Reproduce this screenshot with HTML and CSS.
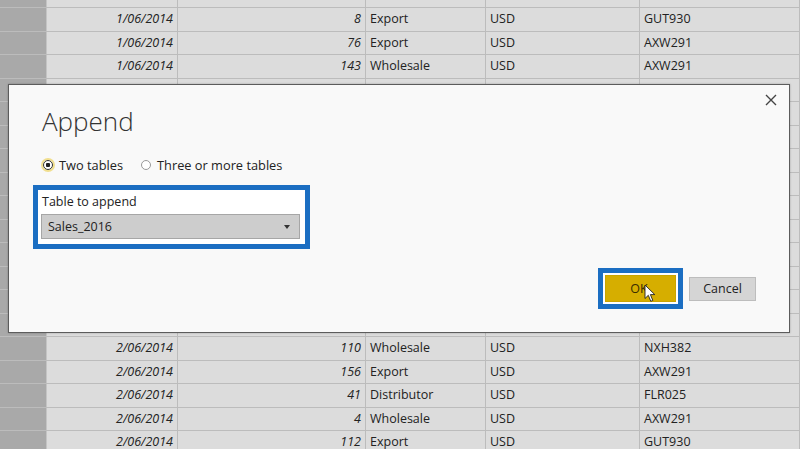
FILE: index.html
```html
<!DOCTYPE html>
<html lang="en">

<head>
  <meta charset="UTF-8" />
  <title>Append</title>
  <link rel="stylesheet" href="styles.css">
</head>

<body>
  <div class="sheet">
    <div class="row"><span class="head"></span><span class="date">1/06/2014</span><span class="num">55</span><span>Wholesale</span><span>USD</span><span>GUT930</span></div>
    <div class="row"><span class="head"></span><span class="date">1/06/2014</span><span class="num">8</span><span>Export</span><span>USD</span><span>GUT930</span></div>
    <div class="row"><span class="head"></span><span class="date">1/06/2014</span><span class="num">76</span><span>Export</span><span>USD</span><span>AXW291</span></div>
    <div class="row"><span class="head"></span><span class="date">1/06/2014</span><span class="num">143</span><span>Wholesale</span><span>USD</span><span>AXW291</span></div>
    <div class="row"><span class="head"></span><span class="date">1/06/2014</span><span class="num">62</span><span>Export</span><span>USD</span><span>FLR025</span></div>
    <div class="row"><span class="head"></span><span class="date">1/06/2014</span><span class="num">19</span><span>Distributor</span><span>USD</span><span>NXH382</span></div>
    <div class="row"><span class="head"></span><span class="date">1/06/2014</span><span class="num">88</span><span>Wholesale</span><span>USD</span><span>GUT930</span></div>
    <div class="row"><span class="head"></span><span class="date">1/06/2014</span><span class="num">27</span><span>Export</span><span>USD</span><span>AXW291</span></div>
    <div class="row"><span class="head"></span><span class="date">1/06/2014</span><span class="num">134</span><span>Wholesale</span><span>USD</span><span>FLR025</span></div>
    <div class="row"><span class="head"></span><span class="date">2/06/2014</span><span class="num">7</span><span>Export</span><span>USD</span><span>NXH382</span></div>
    <div class="row"><span class="head"></span><span class="date">2/06/2014</span><span class="num">95</span><span>Distributor</span><span>USD</span><span>GUT930</span></div>
    <div class="row"><span class="head"></span><span class="date">2/06/2014</span><span class="num">51</span><span>Wholesale</span><span>USD</span><span>AXW291</span></div>
    <div class="row"><span class="head"></span><span class="date">2/06/2014</span><span class="num">12</span><span>Export</span><span>USD</span><span>FLR025</span></div>
    <div class="row"><span class="head"></span><span class="date">2/06/2014</span><span class="num">170</span><span>Wholesale</span><span>USD</span><span>GUT930</span></div>
    <div class="row"><span class="head"></span><span class="date">2/06/2014</span><span class="num">33</span><span>Export</span><span>USD</span><span>AXW291</span></div>
    <div class="row"><span class="head"></span><span class="date">2/06/2014</span><span class="num">110</span><span>Wholesale</span><span>USD</span><span>NXH382</span></div>
    <div class="row"><span class="head"></span><span class="date">2/06/2014</span><span class="num">156</span><span>Export</span><span>USD</span><span>AXW291</span></div>
    <div class="row"><span class="head"></span><span class="date">2/06/2014</span><span class="num">41</span><span>Distributor</span><span>USD</span><span>FLR025</span></div>
    <div class="row"><span class="head"></span><span class="date">2/06/2014</span><span class="num">4</span><span>Wholesale</span><span>USD</span><span>AXW291</span></div>
    <div class="row"><span class="head"></span><span class="date">2/06/2014</span><span class="num">112</span><span>Export</span><span>USD</span><span>GUT930</span></div>
  </div>

  <div class="dialog">
    <svg class="close" width="12" height="12" viewBox="0 0 12 12">
      <path d="M1 1 L11 11 M11 1 L1 11" stroke="#444" stroke-width="1.4" fill="none" />
    </svg>
    <h1>Append</h1>
    <div class="radios">
      <label class="radio"><span class="dot on"></span>Two tables</label>
      <label class="radio"><span class="dot"></span>Three or more tables</label>
    </div>
    <div class="field">
      <div class="field-label">Table to append</div>
      <div class="select">
        <span>Sales_2016</span>
        <span class="arrow"></span>
      </div>
    </div>
    <div class="buttons">
      <div class="ok-frame">
        <div class="btn ok">OK</div>
      </div>
      <div class="btn cancel">Cancel</div>
    </div>
    <svg class="cursor" width="12" height="19" viewBox="0 0 12 19">
      <path d="M1 1 L1 14.5 L4.3 11.3 L6.8 17.3 L8.8 16.4 L6.4 10.6 L10.8 10.6 Z" fill="#fff" stroke="#222" stroke-width="0.9" stroke-linejoin="round" />
    </svg>
  </div>
</body>

</html>
```

FILE: styles.css
```css
* {
  box-sizing: border-box;
}

body {
  margin: 0;
  width: 800px;
  height: 449px;
  overflow: hidden;
  background: #dcdcdc;
  font-family: "Open Sans", "Noto Sans", sans-serif;
  color: #222;
  position: relative;
}

.sheet {
  margin-top: -15.5px;
}

.row {
  display: grid;
  grid-template-columns: 47px 131px 188px 120px 154px 1fr;
  height: 23.5px;
  border-bottom: 1px solid #bcbcbc;
  font-size: 12.5px;
}

.row span {
  line-height: 22.5px;
  padding-left: 4px;
  border-right: 1px solid #bcbcbc;
  white-space: nowrap;
  overflow: hidden;
}

.row .head {
  background: #a9a9a9;
  border-right: 1px solid #c4c4c4;
}

.row .date,
.row .num {
  font-style: italic;
  text-align: right;
  padding-right: 4px;
}

.dialog {
  position: absolute;
  left: 8px;
  top: 84px;
  width: 782px;
  height: 249px;
  border: 1px solid #5c5c5c;
  background: #f9f9f9;
  box-shadow: 0 0 2px rgba(0, 0, 0, 0.25);
  padding: 20px 33px 23px 33px;
  display: flex;
  flex-direction: column;
}

.close {
  position: absolute;
  right: 12px;
  top: 9px;
}

h1 {
  margin: 0;
  font-weight: 300;
  font-size: 26px;
  line-height: 32px;
  color: #333;
}

.radios {
  display: flex;
  gap: 17px;
  margin-top: 19px;
  font-size: 12.8px;
  height: 18px;
  align-items: center;
}

.radio {
  display: flex;
  align-items: center;
  gap: 6px;
}

.dot {
  width: 10px;
  height: 10px;
  margin-left: 1px;
  border-radius: 50%;
  border: 1px solid #999;
  background: #fff;
}

.dot.on {
  border-color: #333;
  background: radial-gradient(circle, #222 2px, #fff 2.5px);
  box-shadow: 0 0 0 2px #f1df8f;
}

.field {
  width: 277px;
  margin-top: 11px;
  margin-left: -9px;
  border: 5px solid #1b6ec2;
  background: #fff;
  padding: 2px 5px 5px 3px;
}

.field-label {
  font-size: 12.5px;
  line-height: 20px;
  padding-left: 1px;
  margin-bottom: 2px;
}

.select {
  height: 25px;
  background: #cdcdcd;
  border: 1px solid #a6a6a6;
  display: flex;
  align-items: center;
  justify-content: space-between;
  padding: 0 9px 0 6px;
  font-size: 12.5px;
}

.arrow {
  width: 0;
  height: 0;
  border-left: 3.5px solid transparent;
  border-right: 3.5px solid transparent;
  border-top: 4px solid #333;
}

.buttons {
  margin-top: auto;
  display: flex;
  justify-content: flex-end;
  align-items: center;
  gap: 6px;
}

.ok-frame {
  border: 5px solid #1b6ec2;
  background: #fff;
  padding: 2px;
}

.btn {
  font-size: 12.5px;
  display: flex;
  align-items: center;
  justify-content: center;
}

.ok {
  width: 71px;
  height: 27px;
  padding-right: 3px;
  background: #d6ae00;
  border: 1px solid #c9a400;
  color: #3a2c00;
}

.cancel {
  width: 67px;
  height: 24px;
  background: #d5d5d5;
  border: 1px solid #bdbdbd;
}

.cursor {
  position: absolute;
  left: 635px;
  top: 199px;
}
```
